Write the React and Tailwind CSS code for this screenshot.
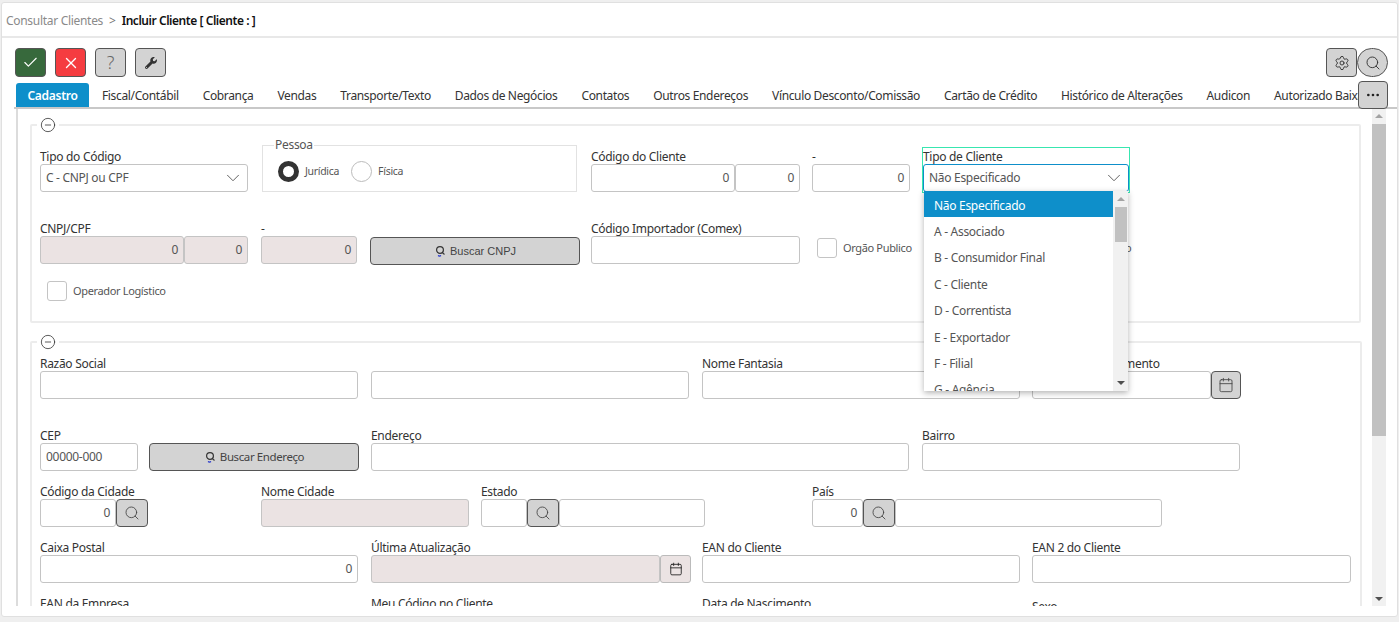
import { Check, X, Settings, Search, Calendar, Ellipsis, ChevronDown, CircleMinus } from 'lucide-react'
import { FaWrench } from 'react-icons/fa'

const tabs = [
  'Fiscal/Contábil', 'Cobrança', 'Vendas', 'Transporte/Texto', 'Dados de Negócios', 'Contatos',
  'Outros Endereços', 'Vínculo Desconto/Comissão', 'Cartão de Crédito', 'Histórico de Alterações', 'Audicon', 'Autorizado Baixar',
]

const options = ['A - Associado', 'B - Consumidor Final', 'C - Cliente', 'D - Correntista', 'E - Exportador', 'F - Filial']

const Label = ({ children }) => <div className="h-[14px] text-[12px] leading-[14px] text-[#333] whitespace-nowrap">{children}</div>

const Input = ({ w, value, disabled, left }) => (
  <div className={`h-[28px] shrink-0 rounded-[3px] border border-[#c4c4c4] px-[5px] text-[12px] leading-[26px] text-[#555] ${disabled ? 'bg-[#ebe3e3]' : 'bg-white'} ${left ? 'text-left' : 'text-right'} ${w}`}>
    {value}
  </div>
)

const IconBtn = ({ w, children }) => (
  <div className={`flex h-[28px] shrink-0 items-center justify-center rounded-[4px] border border-[#555] bg-[#d3d3d3] text-[#444] ${w}`}>
    {children}
  </div>
)

const ToolBtn = ({ bg, children }) => (
  <div className={`flex h-[29px] w-[31px] items-center justify-center rounded-[4px] border border-[#555] ${bg}`}>
    {children}
  </div>
)

const SmallSearch = () => (
  <svg width="12" height="13" viewBox="0 0 12 13" fill="none" className="mr-[4px]">
    <circle cx="6" cy="5" r="3.4" stroke="#333" strokeWidth="1.2" />
    <path d="M8.4 7.6L10.5 9.5" stroke="#333" strokeWidth="1.2" />
    <path d="M4 10.5a2.5 2.5 0 0 0 3 0" stroke="#2233cc" strokeWidth="1.2" />
  </svg>
)

const Search2 = ({ label, w }) => (
  <div className={`flex h-[28px] shrink-0 items-center justify-center rounded-[4px] border border-[#555] bg-[#d3d3d3] text-[#444] ${w}`}>
    <SmallSearch />
    {label}
  </div>
)

const Check2 = ({ label, className }) => (
  <div className={`flex items-center ${className}`}>
    <div className="h-[20px] w-[20px] rounded-[3px] border border-[#c4c4c4] bg-white" />
    <span className="ml-[6px] text-[11px] tracking-[-0.35px] text-[#555] whitespace-nowrap">{label}</span>
  </div>
)

const Legend = () => (
  <legend className="ml-[-3px] px-[3px]">
    <CircleMinus size={16} strokeWidth={1.2} className="text-[#333]" />
  </legend>
)

export default function App() {
  return (
    <div className="relative h-[622px] w-[1399px] overflow-hidden bg-[#efefef] font-['Noto_Sans',sans-serif] tracking-[-0.3px]">
      <div className="mx-[1px] mt-[2px] h-[615px] overflow-hidden rounded-[3px] border border-[#e0e0e0] bg-white">
        <div className="flex h-[35px] items-center border-b-2 border-[#e8e8e8] pl-[4px] pt-[2px] text-[12px]">
          <span className="text-[#8a8a8a]">Consultar Clientes</span>
          <span className="mx-[6px] text-[#777]">&gt;</span>
          <span className="font-semibold tracking-[-0.45px] text-[#111]">Incluir Cliente [ Cliente : ]</span>
        </div>

        <div className="flex h-[45px] items-start justify-between pl-[13px] pr-[9px] pt-[10px]">
          <div className="flex gap-[9px]">
            <ToolBtn bg="bg-[#37693c]"><Check size={17} className="text-white" strokeWidth={1.6} /></ToolBtn>
            <ToolBtn bg="bg-[#f53c40]"><X size={18} className="text-white" strokeWidth={1.8} /></ToolBtn>
            <ToolBtn bg="bg-[#d3d3d3]"><span className="text-[18px] font-light text-[#666]">?</span></ToolBtn>
            <ToolBtn bg="bg-[#d3d3d3]"><FaWrench size={12} className="text-[#333]" /></ToolBtn>
          </div>
          <div className="flex">
            <ToolBtn bg="bg-[#d3d3d3]"><Settings size={16} className="text-[#333]" strokeWidth={1.4} /></ToolBtn>
            <div className="flex h-[29px] w-[31px] items-center justify-center rounded-full border border-[#555] bg-[#d3d3d3]">
              <Search size={16} className="text-[#333]" strokeWidth={1.4} />
            </div>
          </div>
        </div>

        <div className="relative ml-[12px] flex h-[26px] overflow-hidden border-b-2 border-[#c8c8c8] pr-[27px]">
          <div className="ml-[2px] flex h-[26px] w-[73px] shrink-0 items-center justify-center rounded-t-[3px] bg-[#0e8fca] text-[12px] font-semibold text-white">Cadastro</div>
          <div className="flex min-w-0 flex-1 overflow-hidden pl-[1px]">
            {tabs.map((t) => (
              <div key={t} className="shrink-0 pl-[12px] pr-[12px] text-[12px] leading-[26px] tracking-[-0.355px] whitespace-nowrap text-[#333]">{t}</div>
            ))}
          </div>
        </div>
        <div className="absolute right-[11px] top-[81px] flex h-[28px] w-[30px] items-center justify-center rounded-[4px] border border-[#555] bg-[#d3d3d3]">
          <Ellipsis size={16} className="text-[#222]" strokeWidth={2} />
        </div>

        <div className="ml-[14px] flex h-[497px] border-l-2 border-[#dcdcdc]">
          <div className="w-[1354px] shrink-0 overflow-hidden pl-[12px] pr-[11px]">
            <fieldset className="mt-[8px] h-[206px] rounded-[2px] border-2 border-[#ececec] pl-[8px] pr-[9px]">
              <Legend />
              <div className="mt-[5px] flex items-end">
                <div className="w-[208px] shrink-0">
                  <Label>Tipo do Código</Label>
                  <div className="flex h-[28px] items-center justify-between rounded-[3px] border border-[#c4c4c4] pl-[5px] pr-[3px] text-[12px] text-[#555]">
                    C - CNPJ ou CPF
                    <ChevronDown size={22} strokeWidth={1} />
                  </div>
                </div>
                <fieldset className="ml-[14px] h-[54px] w-[315px] shrink-0 border border-[#e2e2e2] pl-[15px]">
                  <legend className="ml-[-4px] px-[1px] text-[12px] leading-[14px] text-[#555]">Pessoa</legend>
                  <div className="mt-[9px] flex items-center">
                    <div className="h-[21px] w-[21px] rounded-full border-[5px] border-[#333]" />
                    <span className="ml-[6px] text-[10.5px] text-[#555]">Jurídica</span>
                    <div className="ml-[12px] h-[21px] w-[21px] rounded-full border border-[#bbb]" />
                    <span className="ml-[6px] text-[10.5px] text-[#555]">Física</span>
                  </div>
                </fieldset>
                <div className="ml-[14px] shrink-0">
                  <Label>Código do Cliente</Label>
                  <div className="flex">
                    <Input w="w-[144px]" value="0" />
                    <Input w="w-[65px]" value="0" />
                  </div>
                </div>
                <div className="ml-[12px] w-[98px] shrink-0">
                  <Label>-</Label>
                  <Input w="w-full" value="0" />
                </div>
                <div className="ml-[12px] mb-[-1px] w-[208px] shrink-0 border border-[#38e6b0]">
                  <div className="h-[16px] text-[12px] leading-[18px] text-[#333]">Tipo de Cliente</div>
                  <div className="flex h-[28px] items-center justify-between rounded-[3px] border border-[#0e8fca] pl-[5px] pr-[3px] text-[12px] text-[#555]">
                    Não Especificado
                    <ChevronDown size={22} strokeWidth={1} />
                  </div>
                </div>
              </div>

              <div className="mt-[30px] flex items-end">
                <div className="shrink-0">
                  <Label>CNPJ/CPF</Label>
                  <div className="flex">
                    <Input w="w-[144px]" value="0" disabled />
                    <Input w="w-[64px]" value="0" disabled />
                  </div>
                </div>
                <div className="ml-[13px] w-[96px] shrink-0">
                  <Label>-</Label>
                  <Input w="w-full" value="0" disabled />
                </div>
                <Search2 label="Buscar CNPJ" w="ml-[13px] mb-[-1px] w-[210px] font-['Liberation_Sans',sans-serif] text-[11px] tracking-normal" />
                <div className="ml-[11px] shrink-0">
                  <Label>Código Importador (Comex)</Label>
                  <Input w="w-[209px]" />
                </div>
                <Check2 label="Orgão Publico" className="ml-[17px] mb-[6px]" />
                <Check2 label="Substituto" className="ml-[144px] mb-[6px]" />
              </div>

              <Check2 label="Operador Logístico" className="ml-[7px] mt-[17px]" />
            </fieldset>

            <fieldset className="mt-[11px] h-[280px] rounded-[2px] border-2 border-[#ececec] pl-[8px] pr-[9px]">
              <Legend />
              <div className="mt-[7px] grid grid-cols-[318px_318px_318px_318px] gap-x-[13px]">
                <div><Label>Razão Social</Label><Input w="w-full" /></div>
                <div className="pt-[14px]"><Input w="w-full" /></div>
                <div><Label>Nome Fantasia</Label><Input w="w-full" /></div>
                <div className="ml-[-1px]">
                  <Label>Data de Cadastramento</Label>
                  <div className="flex">
                    <Input w="w-[179px]" />
                    <IconBtn w="w-[30px]"><Calendar size={16} strokeWidth={1.3} /></IconBtn>
                  </div>
                </div>
              </div>

              <div className="mt-[30px] flex">
                <div><Label>CEP</Label><Input w="w-[98px]" value="00000-000" left /></div>
                <Search2 label="Buscar Endereço" w="ml-[11px] mt-[14px] w-[210px] text-[11.5px] tracking-[-0.4px]" />
                <div className="ml-[12px]"><Label>Endereço</Label><Input w="w-[538px]" /></div>
                <div className="ml-[13px]"><Label>Bairro</Label><Input w="w-[318px]" /></div>
              </div>

              <div className="mt-[14px] flex">
                <div>
                  <Label>Código da Cidade</Label>
                  <div className="flex">
                    <Input w="w-[76px]" value="0" />
                    <IconBtn w="w-[32px]"><Search size={16} strokeWidth={1.3} /></IconBtn>
                  </div>
                </div>
                <div className="ml-[113px]"><Label>Nome Cidade</Label><Input w="w-[208px]" disabled /></div>
                <div className="ml-[12px]">
                  <Label>Estado</Label>
                  <div className="flex">
                    <Input w="w-[46px]" />
                    <IconBtn w="w-[32px]"><Search size={16} strokeWidth={1.3} /></IconBtn>
                    <Input w="w-[146px]" />
                  </div>
                </div>
                <div className="ml-[107px]">
                  <Label>País</Label>
                  <div className="flex">
                    <Input w="w-[51px]" value="0" />
                    <IconBtn w="w-[32px]"><Search size={16} strokeWidth={1.3} /></IconBtn>
                    <Input w="w-[267px]" />
                  </div>
                </div>
              </div>

              <div className="mt-[14px] grid grid-cols-[318px_318px_318px_318px] gap-x-[13px]">
                <div><Label>Caixa Postal</Label><Input w="w-full" value="0" /></div>
                <div>
                  <Label>Última Atualização</Label>
                  <div className="flex">
                    <Input w="w-[289px]" disabled />
                    <div className="flex h-[28px] w-[31px] shrink-0 items-center justify-center rounded-[3px] border border-[#bbb] bg-[#ebe3e3] text-[#222]">
                      <Calendar size={14} strokeWidth={1.5} />
                    </div>
                  </div>
                </div>
                <div><Label>EAN do Cliente</Label><Input w="w-full" /></div>
                <div className="ml-[-1px]"><Label>EAN 2 do Cliente</Label><Input w="w-full" /></div>
              </div>

              <div className="mt-[14px] grid grid-cols-[318px_318px_318px_318px] gap-x-[13px]">
                <Label>EAN da Empresa</Label>
                <Label>Meu Código no Cliente</Label>
                <Label>Data de Nascimento</Label>
                <div className="ml-[-1px] pt-[3px]"><Label>Sexo</Label></div>
              </div>
            </fieldset>
          </div>

          <div className="flex h-full w-[14px] shrink-0 flex-col items-center bg-[#f1f1f1]">
            <div className="mt-[5px] h-0 w-0 border-x-[4px] border-b-[4px] border-x-transparent border-b-[#a3a3a3]" />
            <div className="mt-[6px] h-[312px] w-full bg-[#c1c1c1]" />
            <div className="mt-auto mb-[5px] h-0 w-0 border-x-[4px] border-t-[4px] border-x-transparent border-t-[#505050]" />
          </div>
        </div>
      </div>

      <div className="absolute left-[924px] top-[191px] flex h-[200px] w-[204px] bg-white shadow-[0_2px_6px_rgba(0,0,0,0.3)]">
        <div className="h-full w-[189px] overflow-hidden text-[12px] text-[#555]">
          <div className="h-[26px] bg-[#0e8fca] pl-[10px] leading-[29px] text-white">Não Especificado</div>
          {options.map((o) => (
            <div key={o} className="h-[26.4px] pl-[10px] leading-[29px]">{o}</div>
          ))}
          <div className="h-[26px] pl-[10px] leading-[29px]">G - Agência</div>
        </div>
        <div className="flex h-full w-[15px] flex-col items-center bg-[#f1f1f1]">
          <div className="mt-[6px] h-0 w-0 border-x-[4px] border-b-[4px] border-x-transparent border-b-[#a3a3a3]" />
          <div className="mt-[6px] h-[35px] w-[12px] bg-[#c1c1c1]" />
          <div className="mt-auto mb-[6px] h-0 w-0 border-x-[4px] border-t-[4px] border-x-transparent border-t-[#505050]" />
        </div>
      </div>
    </div>
  )
}
